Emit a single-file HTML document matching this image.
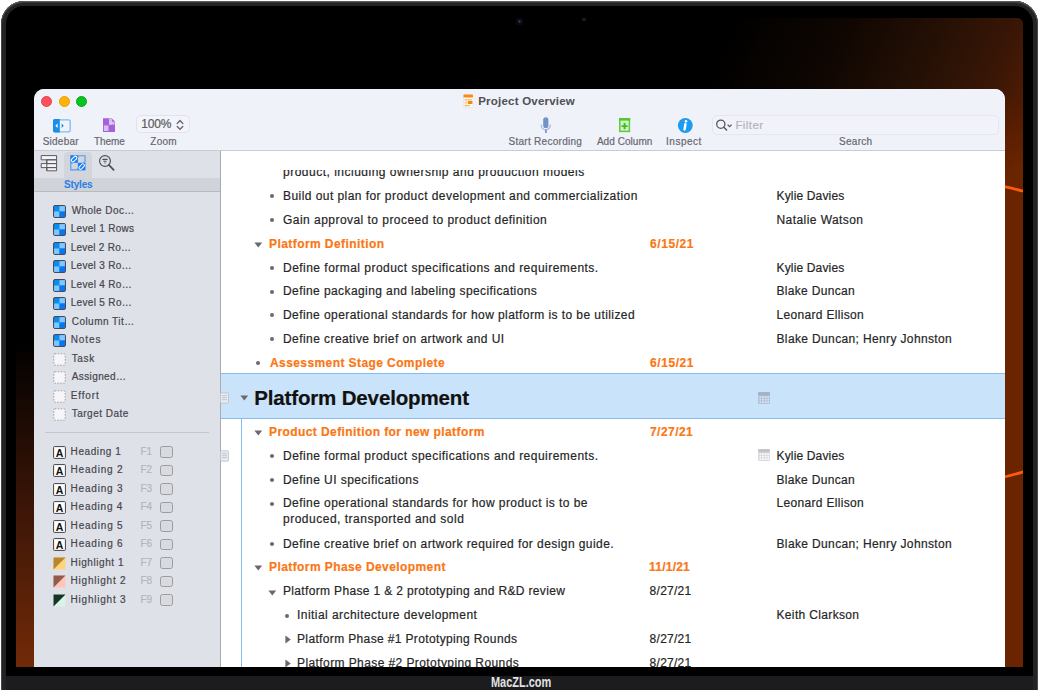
<!DOCTYPE html>
<html><head><meta charset="utf-8"><style>
html,body{margin:0;padding:0;}
body{width:1040px;height:690px;overflow:hidden;position:relative;background:#fff;font-family:"Liberation Sans", sans-serif;}
div{position:absolute;box-sizing:border-box;}
.t{white-space:nowrap;line-height:16px;-webkit-text-stroke:0.2px currentColor;}
#ring{left:1px;top:1px;width:1037px;height:740px;border-radius:23px;background:#232325;box-shadow:inset 0 1px 0 #5a5a5c, inset 1px 0 0 #48484a, inset -1px 0 0 #48484a, inset 0 2px 1px #3a3a3c;}
#bezel{left:6px;top:6px;width:1027px;height:740px;border-radius:18px;background:#000;}
#wall{position:absolute;left:16px;top:18px;border-radius:6px 6px 0 0;}
#cam{left:515.5px;top:17.5px;width:7px;height:7px;border-radius:50%;background:radial-gradient(circle,#2a4a8a 0,#12203a 1.2px,#08080c 2.2px,#101014 3.5px);}
#cam2{left:581.5px;top:17.5px;width:4px;height:3px;border-radius:1px;background:#1c1c1e;}
#chin{left:6px;top:675.6px;width:1027px;height:20px;background:#1c1c1e;}
#brand{left:490.5px;top:674.3px;font-size:14.5px;font-weight:700;color:#e2e2e2;line-height:16px;transform:scaleX(0.755);transform-origin:0 0;white-space:nowrap;}
#win{left:34px;top:89px;width:971px;height:577.8px;border-radius:10px 10px 0 0;overflow:hidden;background:#fff;}
#toolbar{left:0;top:0;width:971px;height:62px;background:#f0f2fa;border-bottom:1px solid #cbccd2;}
#sidebar{left:0;top:62px;width:187px;height:520px;background:#dfe1e9;border-right:1px solid #aaabb0;}
#stylesband{left:0;top:88.6px;width:186px;height:14px;background:#d1d3db;border-bottom:1px solid #b9bbc1;}
#stylestab{left:30.3px;top:63px;width:27.4px;height:25.6px;background:#d3d5dc;border-radius:4px 4px 0 0;}
.light{width:11.2px;height:11.2px;border-radius:50%;border:0.5px solid;}
</style></head><body>
<div id="ring"></div><div id="bezel"></div>
<svg id="wall" width="1007" height="649" viewBox="16 18 1007 649">
<defs><linearGradient id="wg" gradientUnits="userSpaceOnUse" x1="16" y1="419" x2="116" y2="619">
<stop offset="0" stop-color="#000"/><stop offset="1" stop-color="#6a2400"/></linearGradient><linearGradient id="lg" gradientUnits="userSpaceOnUse" x1="0" y1="340" x2="0" y2="667"><stop offset="0" stop-color="#000"/><stop offset="0.5" stop-color="#3a1507"/><stop offset="1" stop-color="#722a08"/></linearGradient><linearGradient id="tg" gradientUnits="userSpaceOnUse" x1="700" y1="0" x2="1023" y2="150"><stop offset="0.1" stop-color="#000"/><stop offset="0.39" stop-color="#0e0602"/><stop offset="0.70" stop-color="#2a1205"/><stop offset="0.84" stop-color="#3a1606"/><stop offset="0.92" stop-color="#4a1a04"/><stop offset="1" stop-color="#521d03"/></linearGradient></defs>
<rect x="16" y="18" width="1007" height="649" fill="url(#wg)"/><rect x="16" y="89" width="19" height="578" fill="url(#lg)"/><rect x="16" y="18" width="1007" height="80" fill="url(#tg)"/>
<path d="M1003 186.4 Q1014 188.4 1025 191.8" stroke="#ff5c0a" stroke-width="2.7" fill="none"/>
<path d="M1003 477.2 Q1014 474.8 1025 471.4" stroke="#ff5c0a" stroke-width="2.7" fill="none"/>
</svg>
<div id="cam"></div><div id="cam2"></div>
<div id="chin"></div>
<div id="brand">MacZL.com</div>
<div style="left:0;top:0;width:1040px;height:666.8px;overflow:hidden"><div id="win"><div id="toolbar"></div><div id="sidebar"></div><div id="stylesband"></div><div id="stylestab"></div></div>
<div class="light" style="left:40.9px;top:95.80000000000001px;background:#ff4f58;border-color:#e8424b"></div>
<div class="light" style="left:58.6px;top:95.80000000000001px;background:#ffb405;border-color:#e8a000"></div>
<div class="light" style="left:76.30000000000001px;top:95.80000000000001px;background:#08c320;border-color:#02ab17"></div>
<svg style="position:absolute;left:463px;top:93.6px;" width="10.4" height="14" viewBox="0 0 10.4 14"><rect x="0.5" y="0.5" width="9.4" height="13" rx="0.8" fill="#fffaf4" stroke="#e6e0da" stroke-width="0.6"/><rect x="0.5" y="0.5" width="9.4" height="3" fill="#f98a1c"/><path d="M1.4 5.8 H9 M1.4 11.6 H7" stroke="#fbb46a" stroke-width="1.2"/><rect x="5" y="7" width="4.4" height="3" fill="#f8860f"/><path d="M1.4 8.6 H4.6 M3 7 V10.4" stroke="#fcc890" stroke-width="1"/></svg>
<div class="t" style="left:478.20px;top:92.82px;font-size:11.5px;font-weight:700;color:#505055;letter-spacing:0.220px;-webkit-text-stroke:0.05px currentColor;">Project Overview</div>
<svg style="position:absolute;left:52px;top:118px;" width="20" height="16" viewBox="0 0 20 16"><rect x="1.6" y="1.8" width="16.6" height="12" rx="1.6" fill="none" stroke="#79bdf2" stroke-width="1.3"/><path d="M1 2.6 a1.6 1.6 0 0 1 1.6 -1.6 H7.8 V14.4 H2.6 a1.6 1.6 0 0 1 -1.6 -1.6z" fill="#1b8fe6"/><path d="M5.6 5.6 L3.4 7.8 L5.6 10z" fill="#fff"/><path d="M9.6 5.6 L11.8 7.8 L9.6 10z" fill="#1b8fe6"/></svg>
<svg style="position:absolute;left:102px;top:117px;" width="14" height="16" viewBox="0 0 14 16"><path d="M1 1.2 H9.6 L13 4.6 V15 H1z" fill="#a760dc"/><rect x="7" y="1.6" width="3" height="6" fill="#dccaf0" opacity="0.9"/><rect x="7" y="4.6" width="5.6" height="3" fill="#dccaf0" opacity="0.9"/><rect x="1.9" y="8.4" width="4.6" height="5.6" fill="#dccaf0" opacity="0.9"/></svg>
<div style="left:136.4px;top:115.3px;width:53.2px;height:18.2px;border:1px solid #e3e4eb;border-radius:4px;background:#f3f4fb"></div>
<div class="t" style="left:141.20px;top:116.04px;font-size:12px;font-weight:400;color:#5c5c60;letter-spacing:-0.133px;">100%</div>
<svg style="position:absolute;left:175px;top:118px;" width="11" height="14" viewBox="0 0 11 14"><path d="M2.2 5.4 L5 2.6 L7.8 5.4 M2.2 8.4 L5 11.2 L7.8 8.4" stroke="#6a6a70" stroke-width="1.4" fill="none" stroke-linecap="round" stroke-linejoin="round"/></svg>
<div class="t" style="left:42.70px;top:133.63px;font-size:10px;font-weight:400;color:#68686e;letter-spacing:0.233px;">Sidebar</div>
<div class="t" style="left:94.00px;top:133.63px;font-size:10px;font-weight:400;color:#68686e;letter-spacing:-0.075px;">Theme</div>
<div class="t" style="left:150.30px;top:133.63px;font-size:10px;font-weight:400;color:#68686e;letter-spacing:0.267px;">Zoom</div>
<div class="t" style="left:508.50px;top:133.63px;font-size:10px;font-weight:400;color:#68686e;letter-spacing:0.279px;">Start Recording</div>
<div class="t" style="left:596.90px;top:133.63px;font-size:10px;font-weight:400;color:#68686e;letter-spacing:0.044px;">Add Column</div>
<div class="t" style="left:666.10px;top:133.63px;font-size:10px;font-weight:400;color:#68686e;letter-spacing:0.483px;">Inspect</div>
<div class="t" style="left:839.00px;top:133.63px;font-size:10px;font-weight:400;color:#68686e;letter-spacing:0.280px;">Search</div>
<svg style="position:absolute;left:538px;top:115px;" width="16" height="20" viewBox="0 0 16 20"><rect x="5.2" y="2.2" width="5.2" height="10.8" rx="2.6" fill="#7392c8"/><path d="M3.4 9.6 V10.4 a4.4 4.4 0 0 0 8.8 0 V9.6" stroke="#a8bce0" stroke-width="1.3" fill="none"/><rect x="7" y="14.6" width="1.8" height="3.4" fill="#7a97c9"/></svg>
<svg style="position:absolute;left:618px;top:117px;" width="13" height="16" viewBox="0 0 13 16"><rect x="1.8" y="1.8" width="9.6" height="12.6" fill="#d6f0d2" stroke="#5ccd38" stroke-width="1.5"/><rect x="1" y="1" width="11.2" height="2.6" fill="#4fcb25"/><path d="M6.6 6 V12.2 M3.5 9.1 H9.7" stroke="#3fbc1e" stroke-width="1.9"/></svg>
<svg style="position:absolute;left:677px;top:117px;" width="17" height="17" viewBox="0 0 17 17"><circle cx="8.3" cy="8.5" r="7.4" fill="#1c9bf0"/><circle cx="9" cy="4.3" r="1.35" fill="#fff"/><path d="M8.4 7.2 L7.6 12.4" stroke="#fff" stroke-width="2.5" stroke-linecap="round"/></svg>
<div style="left:712px;top:114.6px;width:287px;height:20.8px;border:1px solid #e5e6ee;border-radius:5px;background:#f1f2fa"></div>
<svg style="position:absolute;left:714px;top:117px;" width="22" height="16" viewBox="0 0 22 16"><circle cx="6.8" cy="7.2" r="4.1" stroke="#55555a" stroke-width="1.3" fill="none"/><path d="M9.8 10.2 L12.6 13" stroke="#55555a" stroke-width="1.5" stroke-linecap="round"/><path d="M13.6 7.6 L15.6 9.6 L17.6 7.6" stroke="#55555a" stroke-width="1.2" fill="none"/></svg>
<div class="t" style="left:735.40px;top:117.42px;font-size:11.5px;font-weight:400;color:#b4b4ba;letter-spacing:0.440px;">Filter</div>
<svg style="position:absolute;left:40px;top:154px;" width="18" height="18" viewBox="0 0 18 18"><path d="M1.2 1.6 H16.6 V5.8 H1.2z M6.8 5.8 H16.6 V9.6 H6.8z M1.2 9.6 H16.6 V13.6 H1.2z M6.8 13.6 H16.6 V16.8 H6.8z M6.8 5.8 V16.8" stroke="#5a5a60" stroke-width="1" fill="#f4f4f6" stroke-linejoin="round"/></svg>
<svg style="position:absolute;left:69px;top:154px;" width="19" height="18" viewBox="0 0 19 18"><rect x="1.3" y="1.2" width="7.6" height="7.6" fill="#1a7ff2"/><rect x="8.9" y="8.8" width="7.6" height="7.6" fill="#1a7ff2"/><rect x="1.8" y="3.5" width="6.6" height="3" rx="1.5" transform="rotate(-45 5.1 5)" fill="none" stroke="#fff" stroke-width="1"/><rect x="9.4" y="11.1" width="6.6" height="3" rx="1.5" transform="rotate(-45 12.7 12.6)" fill="none" stroke="#fff" stroke-width="1"/><path d="M9.4 1.7 H16 V8.3 M1.8 9.3 V15.9 H8.4" stroke="#4f9cf6" stroke-width="1.1" fill="none"/><path d="M9.4 1.7 V3.6 M14 8.3 H16 M1.8 9.3 H3.8 M8.4 13.9 V15.9" stroke="#4f9cf6" stroke-width="1" fill="none"/></svg>
<svg style="position:absolute;left:98px;top:154px;" width="19" height="18" viewBox="0 0 19 18"><circle cx="7" cy="7" r="5.4" stroke="#505055" stroke-width="1.2" fill="none"/><path d="M4.4 5.4 H9.6 M5.4 7.2 H8.6 M6.4 9 H7.6" stroke="#505055" stroke-width="1.1"/><path d="M10.8 10.8 L15.6 15.8" stroke="#505055" stroke-width="1.8" stroke-linecap="round"/></svg>
<div class="t" style="left:64.10px;top:176.73px;font-size:10px;font-weight:700;color:#2a7fe2;letter-spacing:-0.200px;-webkit-text-stroke:0.05px currentColor;">Styles</div>
<svg style="position:absolute;left:53px;top:204.5px;" width="13" height="13" viewBox="0 0 13 13"><rect x="0.6" y="0.6" width="11.8" height="11.8" rx="1" fill="#0a8cf0" stroke="#404048" stroke-width="1"/><rect x="6.5" y="1.1" width="5.4" height="5.4" fill="#82c8ff"/><rect x="1.1" y="6.5" width="5.4" height="5.4" fill="#82c8ff"/><rect x="6.5" y="6.5" width="5.4" height="5.4" fill="#0a74f2"/></svg>
<div class="t" style="left:71.70px;top:202.84px;font-size:10px;font-weight:400;color:#46464c;letter-spacing:0.411px;">Whole Doc…</div>
<svg style="position:absolute;left:53px;top:223.0px;" width="13" height="13" viewBox="0 0 13 13"><rect x="0.6" y="0.6" width="11.8" height="11.8" rx="1" fill="#0a8cf0" stroke="#404048" stroke-width="1"/><rect x="6.5" y="1.1" width="5.4" height="5.4" fill="#82c8ff"/><rect x="1.1" y="6.5" width="5.4" height="5.4" fill="#82c8ff"/><rect x="6.5" y="6.5" width="5.4" height="5.4" fill="#0a74f2"/></svg>
<div class="t" style="left:70.70px;top:221.34px;font-size:10px;font-weight:400;color:#46464c;letter-spacing:0.309px;">Level 1 Rows</div>
<svg style="position:absolute;left:53px;top:241.5px;" width="13" height="13" viewBox="0 0 13 13"><rect x="0.6" y="0.6" width="11.8" height="11.8" rx="1" fill="#0a8cf0" stroke="#404048" stroke-width="1"/><rect x="6.5" y="1.1" width="5.4" height="5.4" fill="#82c8ff"/><rect x="1.1" y="6.5" width="5.4" height="5.4" fill="#82c8ff"/><rect x="6.5" y="6.5" width="5.4" height="5.4" fill="#0a74f2"/></svg>
<div class="t" style="left:70.70px;top:239.84px;font-size:10px;font-weight:400;color:#46464c;letter-spacing:0.250px;">Level 2 Ro…</div>
<svg style="position:absolute;left:53px;top:260.0px;" width="13" height="13" viewBox="0 0 13 13"><rect x="0.6" y="0.6" width="11.8" height="11.8" rx="1" fill="#0a8cf0" stroke="#404048" stroke-width="1"/><rect x="6.5" y="1.1" width="5.4" height="5.4" fill="#82c8ff"/><rect x="1.1" y="6.5" width="5.4" height="5.4" fill="#82c8ff"/><rect x="6.5" y="6.5" width="5.4" height="5.4" fill="#0a74f2"/></svg>
<div class="t" style="left:70.70px;top:258.34px;font-size:10px;font-weight:400;color:#46464c;letter-spacing:0.310px;">Level 3 Ro…</div>
<svg style="position:absolute;left:53px;top:278.5px;" width="13" height="13" viewBox="0 0 13 13"><rect x="0.6" y="0.6" width="11.8" height="11.8" rx="1" fill="#0a8cf0" stroke="#404048" stroke-width="1"/><rect x="6.5" y="1.1" width="5.4" height="5.4" fill="#82c8ff"/><rect x="1.1" y="6.5" width="5.4" height="5.4" fill="#82c8ff"/><rect x="6.5" y="6.5" width="5.4" height="5.4" fill="#0a74f2"/></svg>
<div class="t" style="left:70.70px;top:276.84px;font-size:10px;font-weight:400;color:#46464c;letter-spacing:0.320px;">Level 4 Ro…</div>
<svg style="position:absolute;left:53px;top:297.0px;" width="13" height="13" viewBox="0 0 13 13"><rect x="0.6" y="0.6" width="11.8" height="11.8" rx="1" fill="#0a8cf0" stroke="#404048" stroke-width="1"/><rect x="6.5" y="1.1" width="5.4" height="5.4" fill="#82c8ff"/><rect x="1.1" y="6.5" width="5.4" height="5.4" fill="#82c8ff"/><rect x="6.5" y="6.5" width="5.4" height="5.4" fill="#0a74f2"/></svg>
<div class="t" style="left:70.70px;top:295.34px;font-size:10px;font-weight:400;color:#46464c;letter-spacing:0.330px;">Level 5 Ro…</div>
<svg style="position:absolute;left:53px;top:315.5px;" width="13" height="13" viewBox="0 0 13 13"><rect x="0.6" y="0.6" width="11.8" height="11.8" rx="1" fill="#0a8cf0" stroke="#404048" stroke-width="1"/><rect x="6.5" y="1.1" width="5.4" height="5.4" fill="#82c8ff"/><rect x="1.1" y="6.5" width="5.4" height="5.4" fill="#82c8ff"/><rect x="6.5" y="6.5" width="5.4" height="5.4" fill="#0a74f2"/></svg>
<div class="t" style="left:71.70px;top:313.84px;font-size:10px;font-weight:400;color:#46464c;letter-spacing:0.470px;">Column Tit…</div>
<svg style="position:absolute;left:53px;top:334.0px;" width="13" height="13" viewBox="0 0 13 13"><rect x="0.6" y="0.6" width="11.8" height="11.8" rx="1" fill="#0a8cf0" stroke="#404048" stroke-width="1"/><rect x="6.5" y="1.1" width="5.4" height="5.4" fill="#82c8ff"/><rect x="1.1" y="6.5" width="5.4" height="5.4" fill="#82c8ff"/><rect x="6.5" y="6.5" width="5.4" height="5.4" fill="#0a74f2"/></svg>
<div class="t" style="left:70.70px;top:332.34px;font-size:10px;font-weight:400;color:#46464c;letter-spacing:0.900px;">Notes</div>
<svg style="position:absolute;left:53px;top:352.5px;" width="13" height="13" viewBox="0 0 13 13"><rect x="0.8" y="0.8" width="11.4" height="11.4" rx="1" fill="#f6f6f8" stroke="#9a9aa0" stroke-width="0.9" stroke-dasharray="1.6 1.4"/></svg>
<div class="t" style="left:71.70px;top:350.84px;font-size:10px;font-weight:400;color:#46464c;letter-spacing:0.667px;">Task</div>
<svg style="position:absolute;left:53px;top:371.0px;" width="13" height="13" viewBox="0 0 13 13"><rect x="0.8" y="0.8" width="11.4" height="11.4" rx="1" fill="#f6f6f8" stroke="#9a9aa0" stroke-width="0.9" stroke-dasharray="1.6 1.4"/></svg>
<div class="t" style="left:71.70px;top:369.34px;font-size:10px;font-weight:400;color:#46464c;letter-spacing:0.400px;">Assigned…</div>
<svg style="position:absolute;left:53px;top:389.5px;" width="13" height="13" viewBox="0 0 13 13"><rect x="0.8" y="0.8" width="11.4" height="11.4" rx="1" fill="#f6f6f8" stroke="#9a9aa0" stroke-width="0.9" stroke-dasharray="1.6 1.4"/></svg>
<div class="t" style="left:70.70px;top:387.84px;font-size:10px;font-weight:400;color:#46464c;letter-spacing:0.860px;">Effort</div>
<svg style="position:absolute;left:53px;top:408.0px;" width="13" height="13" viewBox="0 0 13 13"><rect x="0.8" y="0.8" width="11.4" height="11.4" rx="1" fill="#f6f6f8" stroke="#9a9aa0" stroke-width="0.9" stroke-dasharray="1.6 1.4"/></svg>
<div class="t" style="left:71.70px;top:406.34px;font-size:10px;font-weight:400;color:#46464c;letter-spacing:0.500px;">Target Date</div>
<div style="left:44.8px;top:432px;width:164.4px;height:1px;background:#c6c7ce"></div>
<svg style="position:absolute;left:53px;top:445.5px;" width="13" height="13" viewBox="0 0 13 13"><rect x="0.6" y="0.6" width="11.8" height="11.8" rx="0.8" fill="#fff" stroke="#404046" stroke-width="1"/><text x="6.5" y="11" text-anchor="middle" font-family="Liberation Sans" font-weight="700" font-size="10.5" fill="#111">A</text></svg>
<div class="t" style="left:70.60px;top:443.94px;font-size:10px;font-weight:400;color:#46464c;letter-spacing:0.588px;">Heading 1</div>
<div class="t" style="left:140.50px;top:443.94px;font-size:10px;font-weight:400;color:#b4b5bb;letter-spacing:0.000px;">F1</div>
<div style="left:160.4px;top:446.00px;width:12.4px;height:11.6px;border:1px solid #9c9da3;border-radius:2.5px;background:#d9dae0"></div>
<svg style="position:absolute;left:53px;top:464.0px;" width="13" height="13" viewBox="0 0 13 13"><rect x="0.6" y="0.6" width="11.8" height="11.8" rx="0.8" fill="#fff" stroke="#404046" stroke-width="1"/><text x="6.5" y="11" text-anchor="middle" font-family="Liberation Sans" font-weight="700" font-size="10.5" fill="#111">A</text></svg>
<div class="t" style="left:70.60px;top:462.44px;font-size:10px;font-weight:400;color:#46464c;letter-spacing:0.800px;">Heading 2</div>
<div class="t" style="left:140.50px;top:462.44px;font-size:10px;font-weight:400;color:#b4b5bb;letter-spacing:0.000px;">F2</div>
<div style="left:160.4px;top:464.50px;width:12.4px;height:11.6px;border:1px solid #9c9da3;border-radius:2.5px;background:#d9dae0"></div>
<svg style="position:absolute;left:53px;top:482.5px;" width="13" height="13" viewBox="0 0 13 13"><rect x="0.6" y="0.6" width="11.8" height="11.8" rx="0.8" fill="#fff" stroke="#404046" stroke-width="1"/><text x="6.5" y="11" text-anchor="middle" font-family="Liberation Sans" font-weight="700" font-size="10.5" fill="#111">A</text></svg>
<div class="t" style="left:70.60px;top:480.94px;font-size:10px;font-weight:400;color:#46464c;letter-spacing:0.800px;">Heading 3</div>
<div class="t" style="left:140.50px;top:480.94px;font-size:10px;font-weight:400;color:#b4b5bb;letter-spacing:0.000px;">F3</div>
<div style="left:160.4px;top:483.00px;width:12.4px;height:11.6px;border:1px solid #9c9da3;border-radius:2.5px;background:#d9dae0"></div>
<svg style="position:absolute;left:53px;top:501.0px;" width="13" height="13" viewBox="0 0 13 13"><rect x="0.6" y="0.6" width="11.8" height="11.8" rx="0.8" fill="#fff" stroke="#404046" stroke-width="1"/><text x="6.5" y="11" text-anchor="middle" font-family="Liberation Sans" font-weight="700" font-size="10.5" fill="#111">A</text></svg>
<div class="t" style="left:70.60px;top:499.44px;font-size:10px;font-weight:400;color:#46464c;letter-spacing:0.775px;">Heading 4</div>
<div class="t" style="left:140.50px;top:499.44px;font-size:10px;font-weight:400;color:#b4b5bb;letter-spacing:0.000px;">F4</div>
<div style="left:160.4px;top:501.50px;width:12.4px;height:11.6px;border:1px solid #9c9da3;border-radius:2.5px;background:#d9dae0"></div>
<svg style="position:absolute;left:53px;top:519.5px;" width="13" height="13" viewBox="0 0 13 13"><rect x="0.6" y="0.6" width="11.8" height="11.8" rx="0.8" fill="#fff" stroke="#404046" stroke-width="1"/><text x="6.5" y="11" text-anchor="middle" font-family="Liberation Sans" font-weight="700" font-size="10.5" fill="#111">A</text></svg>
<div class="t" style="left:70.60px;top:517.93px;font-size:10px;font-weight:400;color:#46464c;letter-spacing:0.812px;">Heading 5</div>
<div class="t" style="left:140.50px;top:517.93px;font-size:10px;font-weight:400;color:#b4b5bb;letter-spacing:0.000px;">F5</div>
<div style="left:160.4px;top:520.00px;width:12.4px;height:11.6px;border:1px solid #9c9da3;border-radius:2.5px;background:#d9dae0"></div>
<svg style="position:absolute;left:53px;top:538.0px;" width="13" height="13" viewBox="0 0 13 13"><rect x="0.6" y="0.6" width="11.8" height="11.8" rx="0.8" fill="#fff" stroke="#404046" stroke-width="1"/><text x="6.5" y="11" text-anchor="middle" font-family="Liberation Sans" font-weight="700" font-size="10.5" fill="#111">A</text></svg>
<div class="t" style="left:70.60px;top:536.43px;font-size:10px;font-weight:400;color:#46464c;letter-spacing:0.812px;">Heading 6</div>
<div class="t" style="left:140.50px;top:536.43px;font-size:10px;font-weight:400;color:#b4b5bb;letter-spacing:0.000px;">F6</div>
<div style="left:160.4px;top:538.50px;width:12.4px;height:11.6px;border:1px solid #9c9da3;border-radius:2.5px;background:#d9dae0"></div>
<svg style="position:absolute;left:53px;top:556.5px;" width="13" height="13" viewBox="0 0 13 13"><rect x="0.5" y="0.5" width="12" height="12" fill="#ffd57c"/><path d="M0.5 0.5 H12.5 L0.5 12.5z" fill="#b8862e"/></svg>
<div class="t" style="left:70.60px;top:554.93px;font-size:10px;font-weight:400;color:#46464c;letter-spacing:0.580px;">Highlight 1</div>
<div class="t" style="left:140.50px;top:554.93px;font-size:10px;font-weight:400;color:#b4b5bb;letter-spacing:0.000px;">F7</div>
<div style="left:160.4px;top:557.00px;width:12.4px;height:11.6px;border:1px solid #9c9da3;border-radius:2.5px;background:#d9dae0"></div>
<svg style="position:absolute;left:53px;top:575.0px;" width="13" height="13" viewBox="0 0 13 13"><rect x="0.5" y="0.5" width="12" height="12" fill="#ffc6b8"/><path d="M0.5 0.5 H12.5 L0.5 12.5z" fill="#935a4e"/></svg>
<div class="t" style="left:70.60px;top:573.43px;font-size:10px;font-weight:400;color:#46464c;letter-spacing:0.770px;">Highlight 2</div>
<div class="t" style="left:140.50px;top:573.43px;font-size:10px;font-weight:400;color:#b4b5bb;letter-spacing:0.000px;">F8</div>
<div style="left:160.4px;top:575.50px;width:12.4px;height:11.6px;border:1px solid #9c9da3;border-radius:2.5px;background:#d9dae0"></div>
<svg style="position:absolute;left:53px;top:593.5px;" width="13" height="13" viewBox="0 0 13 13"><rect x="0.5" y="0.5" width="12" height="12" fill="#d8f4e6"/><path d="M0.5 0.5 H12.5 L0.5 12.5z" fill="#173526"/></svg>
<div class="t" style="left:70.60px;top:591.93px;font-size:10px;font-weight:400;color:#46464c;letter-spacing:0.770px;">Highlight 3</div>
<div class="t" style="left:140.50px;top:591.93px;font-size:10px;font-weight:400;color:#b4b5bb;letter-spacing:0.000px;">F9</div>
<div style="left:160.4px;top:594.00px;width:12.4px;height:11.6px;border:1px solid #9c9da3;border-radius:2.5px;background:#d9dae0"></div>
<div style="left:221px;top:372.8px;width:784px;height:46px;background:#c9e3fb;border-top:1px solid #84bcf2;border-bottom:1px solid #84bcf2"></div>
<div style="left:240.6px;top:419px;width:1px;height:250px;background:#84bcf2"></div>
<div style="left:221px;top:170px;width:500px;height:14px;overflow:hidden"><div class="t" style="left:62.00px;top:-5.56px;font-size:12px;font-weight:400;color:#262626;letter-spacing:0.496px;">product, including ownership and production models</div>
</div>
<div style="left:270.3px;top:194.1px;width:4px;height:4px;border-radius:50%;background:#6a6a6e"></div>
<div class="t" style="left:283.00px;top:187.94px;font-size:12px;font-weight:400;color:#262626;letter-spacing:0.444px;">Build out plan for product development and commercialization</div>
<div class="t" style="left:776.50px;top:187.94px;font-size:12px;font-weight:400;color:#262626;letter-spacing:0.155px;">Kylie Davies</div>
<div style="left:270.3px;top:218.4px;width:4px;height:4px;border-radius:50%;background:#6a6a6e"></div>
<div class="t" style="left:283.00px;top:212.24px;font-size:12px;font-weight:400;color:#262626;letter-spacing:0.464px;">Gain approval to proceed to product definition</div>
<div class="t" style="left:776.50px;top:212.24px;font-size:12px;font-weight:400;color:#262626;letter-spacing:0.431px;">Natalie Watson</div>
<svg style="position:absolute;left:253.8px;top:242.29999999999998px;" width="9" height="6" viewBox="0 0 9 6"><path d="M0.4 0.6 H8.2 L4.3 5.6z" fill="#6a6a6e"/></svg>
<div class="t" style="left:269.00px;top:236.34px;font-size:12px;font-weight:700;color:#fa7714;letter-spacing:0.428px;">Platform Definition</div>
<div class="t" style="left:650.00px;top:236.34px;font-size:12px;font-weight:700;color:#fa7714;letter-spacing:0.583px;">6/15/21</div>
<div style="left:270.3px;top:265.8px;width:4px;height:4px;border-radius:50%;background:#6a6a6e"></div>
<div class="t" style="left:283.00px;top:259.64px;font-size:12px;font-weight:400;color:#262626;letter-spacing:0.472px;">Define formal product specifications and requirements.</div>
<div class="t" style="left:776.50px;top:259.64px;font-size:12px;font-weight:400;color:#262626;letter-spacing:0.155px;">Kylie Davies</div>
<div style="left:270.3px;top:289.5px;width:4px;height:4px;border-radius:50%;background:#6a6a6e"></div>
<div class="t" style="left:283.00px;top:283.34px;font-size:12px;font-weight:400;color:#262626;letter-spacing:0.412px;">Define packaging and labeling specifications</div>
<div class="t" style="left:776.50px;top:283.34px;font-size:12px;font-weight:400;color:#262626;letter-spacing:0.318px;">Blake Duncan</div>
<div style="left:270.3px;top:313.2px;width:4px;height:4px;border-radius:50%;background:#6a6a6e"></div>
<div class="t" style="left:283.00px;top:307.04px;font-size:12px;font-weight:400;color:#262626;letter-spacing:0.421px;">Define operational standards for how platform is to be utilized</div>
<div class="t" style="left:776.50px;top:307.04px;font-size:12px;font-weight:400;color:#262626;letter-spacing:0.314px;">Leonard Ellison</div>
<div style="left:270.3px;top:336.9px;width:4px;height:4px;border-radius:50%;background:#6a6a6e"></div>
<div class="t" style="left:283.00px;top:330.74px;font-size:12px;font-weight:400;color:#262626;letter-spacing:0.429px;">Define creative brief on artwork and UI</div>
<div class="t" style="left:776.50px;top:330.74px;font-size:12px;font-weight:400;color:#262626;letter-spacing:0.363px;">Blake Duncan; Henry Johnston</div>
<div style="left:256.4px;top:360.6px;width:4px;height:4px;border-radius:50%;background:#6a6a6e"></div>
<div class="t" style="left:270.00px;top:354.84px;font-size:12px;font-weight:700;color:#fa7714;letter-spacing:0.412px;">Assessment Stage Complete</div>
<div class="t" style="left:650.00px;top:354.84px;font-size:12px;font-weight:700;color:#fa7714;letter-spacing:0.583px;">6/15/21</div>
<svg style="position:absolute;left:253.8px;top:429.7px;" width="9" height="6" viewBox="0 0 9 6"><path d="M0.4 0.6 H8.2 L4.3 5.6z" fill="#6a6a6e"/></svg>
<div class="t" style="left:269.00px;top:423.74px;font-size:12px;font-weight:700;color:#fa7714;letter-spacing:0.415px;">Product Definition for new platform</div>
<div class="t" style="left:650.00px;top:423.74px;font-size:12px;font-weight:700;color:#fa7714;letter-spacing:0.450px;">7/27/21</div>
<div style="left:270.3px;top:454.4px;width:4px;height:4px;border-radius:50%;background:#6a6a6e"></div>
<div class="t" style="left:283.00px;top:448.24px;font-size:12px;font-weight:400;color:#262626;letter-spacing:0.472px;">Define formal product specifications and requirements.</div>
<div class="t" style="left:776.50px;top:448.24px;font-size:12px;font-weight:400;color:#262626;letter-spacing:0.155px;">Kylie Davies</div>
<div style="left:270.3px;top:478.1px;width:4px;height:4px;border-radius:50%;background:#6a6a6e"></div>
<div class="t" style="left:283.00px;top:471.94px;font-size:12px;font-weight:400;color:#262626;letter-spacing:0.435px;">Define UI specifications</div>
<div class="t" style="left:776.50px;top:471.94px;font-size:12px;font-weight:400;color:#262626;letter-spacing:0.318px;">Blake Duncan</div>
<div style="left:270.3px;top:501.5px;width:4px;height:4px;border-radius:50%;background:#6a6a6e"></div>
<div class="t" style="left:283.00px;top:495.34px;font-size:12px;font-weight:400;color:#262626;letter-spacing:0.442px;">Define operational standards for how product is to be</div>
<div class="t" style="left:776.50px;top:495.34px;font-size:12px;font-weight:400;color:#262626;letter-spacing:0.314px;">Leonard Ellison</div>
<div class="t" style="left:283.00px;top:511.34px;font-size:12px;font-weight:400;color:#262626;letter-spacing:0.507px;">produced, transported and sold</div>
<div style="left:270.3px;top:541.7px;width:4px;height:4px;border-radius:50%;background:#6a6a6e"></div>
<div class="t" style="left:283.00px;top:535.54px;font-size:12px;font-weight:400;color:#262626;letter-spacing:0.433px;">Define creative brief on artwork required for design guide.</div>
<div class="t" style="left:776.50px;top:535.54px;font-size:12px;font-weight:400;color:#262626;letter-spacing:0.363px;">Blake Duncan; Henry Johnston</div>
<svg style="position:absolute;left:253.8px;top:564.7px;" width="9" height="6" viewBox="0 0 9 6"><path d="M0.4 0.6 H8.2 L4.3 5.6z" fill="#6a6a6e"/></svg>
<div class="t" style="left:269.00px;top:558.74px;font-size:12px;font-weight:700;color:#fa7714;letter-spacing:0.416px;">Platform Phase Development</div>
<div class="t" style="left:649.00px;top:558.74px;font-size:12px;font-weight:700;color:#fa7714;letter-spacing:0.233px;">11/1/21</div>
<svg style="position:absolute;left:267.8px;top:589.7px;" width="9" height="6" viewBox="0 0 9 6"><path d="M0.4 0.6 H8.2 L4.3 5.6z" fill="#6a6a6e"/></svg>
<div class="t" style="left:283.00px;top:583.34px;font-size:12px;font-weight:400;color:#262626;letter-spacing:0.341px;">Platform Phase 1 &amp; 2 prototyping and R&amp;D review</div>
<div class="t" style="left:649.60px;top:583.34px;font-size:12px;font-weight:400;color:#262626;letter-spacing:0.267px;">8/27/21</div>
<div style="left:284.7px;top:613.5px;width:4px;height:4px;border-radius:50%;background:#6a6a6e"></div>
<div class="t" style="left:297.00px;top:607.34px;font-size:12px;font-weight:400;color:#262626;letter-spacing:0.445px;">Initial architecture development</div>
<div class="t" style="left:776.50px;top:607.34px;font-size:12px;font-weight:400;color:#262626;letter-spacing:0.346px;">Keith Clarkson</div>
<svg style="position:absolute;left:284.5px;top:634.8px;" width="7" height="9" viewBox="0 0 7 9"><path d="M0.4 0.4 V8.4 L5.8 4.4z" fill="#6a6a6e"/></svg>
<div class="t" style="left:297.00px;top:631.14px;font-size:12px;font-weight:400;color:#262626;letter-spacing:0.357px;">Platform Phase #1 Prototyping Rounds</div>
<div class="t" style="left:649.60px;top:631.14px;font-size:12px;font-weight:400;color:#262626;letter-spacing:0.267px;">8/27/21</div>
<svg style="position:absolute;left:284.5px;top:658.6px;" width="7" height="9" viewBox="0 0 7 9"><path d="M0.4 0.4 V8.4 L5.8 4.4z" fill="#6a6a6e"/></svg>
<div class="t" style="left:297.00px;top:654.94px;font-size:12px;font-weight:400;color:#262626;letter-spacing:0.409px;">Platform Phase #2 Prototyping Rounds</div>
<div class="t" style="left:649.60px;top:654.94px;font-size:12px;font-weight:400;color:#262626;letter-spacing:0.267px;">8/27/21</div>
<svg style="position:absolute;left:239.8px;top:395px;" width="9" height="6" viewBox="0 0 9 6"><path d="M0.4 0.6 H8.2 L4.3 5.6z" fill="#6a6a6e"/></svg>
<div class="t" style="left:254.20px;top:389.90px;font-size:20.5px;font-weight:700;color:#111;letter-spacing:-0.147px;">Platform Development</div>
<svg style="position:absolute;left:219.4px;top:392px;" width="10" height="12" viewBox="0 0 10 12"><rect x="1.5" y="0.8" width="8" height="10.4" rx="1" fill="#e6ebf2" stroke="#b8c0cc" stroke-width="0.8"/><path d="M3 3.6 H8 M3 5.6 H8 M3 7.6 H8" stroke="#b4bcc8" stroke-width="0.7"/></svg>
<svg style="position:absolute;left:219.4px;top:450px;" width="10" height="12" viewBox="0 0 10 12"><rect x="1.5" y="0.8" width="8" height="10.4" rx="1" fill="#e6ebf2" stroke="#b8c0cc" stroke-width="0.8"/><path d="M3 3.6 H8 M3 5.6 H8 M3 7.6 H8" stroke="#b4bcc8" stroke-width="0.7"/></svg>
<svg style="position:absolute;left:758px;top:392px;" width="12" height="12" viewBox="0 0 12 12"><rect x="0.2" y="0.2" width="11.6" height="11.6" fill="#acb8c9"/><rect x="0.2" y="0.2" width="11.6" height="2.6" fill="#a4b1c2"/><rect x="1.4" y="4.2" width="1.9" height="1.8" fill="#d4e5f8"/><rect x="4.0" y="4.2" width="1.9" height="1.8" fill="#d4e5f8"/><rect x="6.6" y="4.2" width="1.9" height="1.8" fill="#d4e5f8"/><rect x="9.2" y="4.2" width="1.9" height="1.8" fill="#d4e5f8"/><rect x="1.4" y="6.7" width="1.9" height="1.8" fill="#d4e5f8"/><rect x="4.0" y="6.7" width="1.9" height="1.8" fill="#d4e5f8"/><rect x="6.6" y="6.7" width="1.9" height="1.8" fill="#d4e5f8"/><rect x="9.2" y="6.7" width="1.9" height="1.8" fill="#d4e5f8"/><rect x="1.4" y="9.2" width="1.9" height="1.8" fill="#d4e5f8"/><rect x="4.0" y="9.2" width="1.9" height="1.8" fill="#d4e5f8"/><rect x="6.6" y="9.2" width="1.9" height="1.8" fill="#d4e5f8"/><rect x="9.2" y="9.2" width="1.9" height="1.8" fill="#d4e5f8"/></svg>
<svg style="position:absolute;left:758px;top:449px;" width="12" height="12" viewBox="0 0 12 12"><rect x="0.2" y="0.2" width="11.6" height="11.6" fill="#d2d2d6"/><rect x="0.2" y="0.2" width="11.6" height="2.6" fill="#c2c2c6"/><rect x="1.4" y="4.2" width="1.9" height="1.8" fill="#fbfbfb"/><rect x="4.0" y="4.2" width="1.9" height="1.8" fill="#fbfbfb"/><rect x="6.6" y="4.2" width="1.9" height="1.8" fill="#fbfbfb"/><rect x="9.2" y="4.2" width="1.9" height="1.8" fill="#fbfbfb"/><rect x="1.4" y="6.7" width="1.9" height="1.8" fill="#fbfbfb"/><rect x="4.0" y="6.7" width="1.9" height="1.8" fill="#fbfbfb"/><rect x="6.6" y="6.7" width="1.9" height="1.8" fill="#fbfbfb"/><rect x="9.2" y="6.7" width="1.9" height="1.8" fill="#fbfbfb"/><rect x="1.4" y="9.2" width="1.9" height="1.8" fill="#fbfbfb"/><rect x="4.0" y="9.2" width="1.9" height="1.8" fill="#fbfbfb"/><rect x="6.6" y="9.2" width="1.9" height="1.8" fill="#fbfbfb"/><rect x="9.2" y="9.2" width="1.9" height="1.8" fill="#fbfbfb"/></svg>
</div>
</body></html>
